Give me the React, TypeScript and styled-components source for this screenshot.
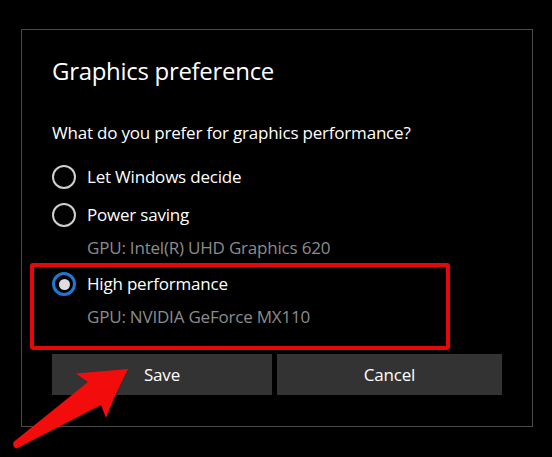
import React from "react";
import styled, { createGlobalStyle } from "styled-components";

const Global = createGlobalStyle`
  html, body { margin: 0; padding: 0; background: #000; }
  body { font-family: "Open Sans", "Noto Sans", sans-serif; color: #fff; }
`;

const Page = styled.div`
  position: relative;
  width: 552px;
  height: 457px;
  background: #000;
  padding: 29px 0 0 21px;
  box-sizing: border-box;
`;

const Dialog = styled.div`
  position: relative;
  box-sizing: border-box;
  width: 512px;
  height: 398px;
  border: 1px solid #4a4a4a;
  padding: 25px 29px 0 30px;
  display: flex;
  flex-direction: column;
`;

const Title = styled.h1`
  margin: 0;
  font-size: 24px;
  line-height: 32px;
  font-weight: 400;
  color: #fff;
  letter-spacing: -0.3px;
`;

const Question = styled.p`
  margin: 36px 0 0;
  font-size: 17px;
  line-height: 20px;
  color: #fff;
  letter-spacing: -0.2px;
`;

const Option = styled.div<{ $gap: number }>`
  display: flex;
  align-items: center;
  height: 24px;
  margin-top: ${(p) => p.$gap}px;
`;

const Radio = styled.span<{ $checked?: boolean }>`
  box-sizing: border-box;
  width: 24px;
  height: 24px;
  border-radius: 50%;
  border: ${(p) => (p.$checked ? "3px solid #1f78cf" : "2px solid #cfcfcf")};
  display: flex;
  align-items: center;
  justify-content: center;
  flex: none;
  &::after {
    content: "";
    display: ${(p) => (p.$checked ? "block" : "none")};
    width: 11px;
    height: 11px;
    border-radius: 50%;
    background: #dedede;
  }
`;

const Label = styled.span`
  margin-left: 11px;
  font-size: 17px;
  line-height: 24px;
  color: #fff;
  letter-spacing: -0.2px;
`;

const Gpu = styled.div<{ $gap: number }>`
  margin: ${(p) => p.$gap}px 0 0 35px;
  font-size: 17px;
  line-height: 20px;
  color: #8c8c8c;
  letter-spacing: -0.2px;
`;

const Buttons = styled.div`
  display: grid;
  grid-template-columns: 220px 225px;
  column-gap: 5px;
  margin-top: 27px;
`;

const Button = styled.button`
  height: 41px;
  border: none;
  background: #333333;
  color: #fff;
  font-family: "Open Sans", "Noto Sans", sans-serif;
  font-size: 17px;
  letter-spacing: -0.2px;
  padding: 0;
`;

const Highlight = styled.div`
  position: absolute;
  left: 8px;
  top: 233px;
  width: 420px;
  height: 87px;
  box-sizing: border-box;
  border: 4px solid #e60808;
  border-radius: 3px;
  pointer-events: none;
`;

const ArrowLayer = styled.svg`
  position: absolute;
  left: 0;
  top: 0;
  pointer-events: none;
`;

export default function App() {
  return (
    <>
      <Global />
      <Page>
        <Dialog>
          <Title>Graphics preference</Title>
          <Question>What do you prefer for graphics performance?</Question>
          <Option $gap={22}>
            <Radio />
            <Label>Let Windows decide</Label>
          </Option>
          <Option $gap={14}>
            <Radio />
            <Label>Power saving</Label>
          </Option>
          <Gpu $gap={11}>GPU: Intel(R) UHD Graphics 620</Gpu>
          <Option $gap={14}>
            <Radio $checked />
            <Label>High performance</Label>
          </Option>
          <Gpu $gap={11}>GPU: NVIDIA GeForce MX110</Gpu>
          <Buttons>
            <Button>Save</Button>
            <Button>Cancel</Button>
          </Buttons>
          <Highlight />
        </Dialog>
        <ArrowLayer width="552" height="457" viewBox="0 0 552 457">
          <path
            d="M128 369 L76 373.5 L88 382 L13.5 442 Q12 447 16.5 448.5 L101 405 L106 418 Q116 392 128 369 Z"
            fill="#f20c0c"
          />
        </ArrowLayer>
      </Page>
    </>
  );
}
